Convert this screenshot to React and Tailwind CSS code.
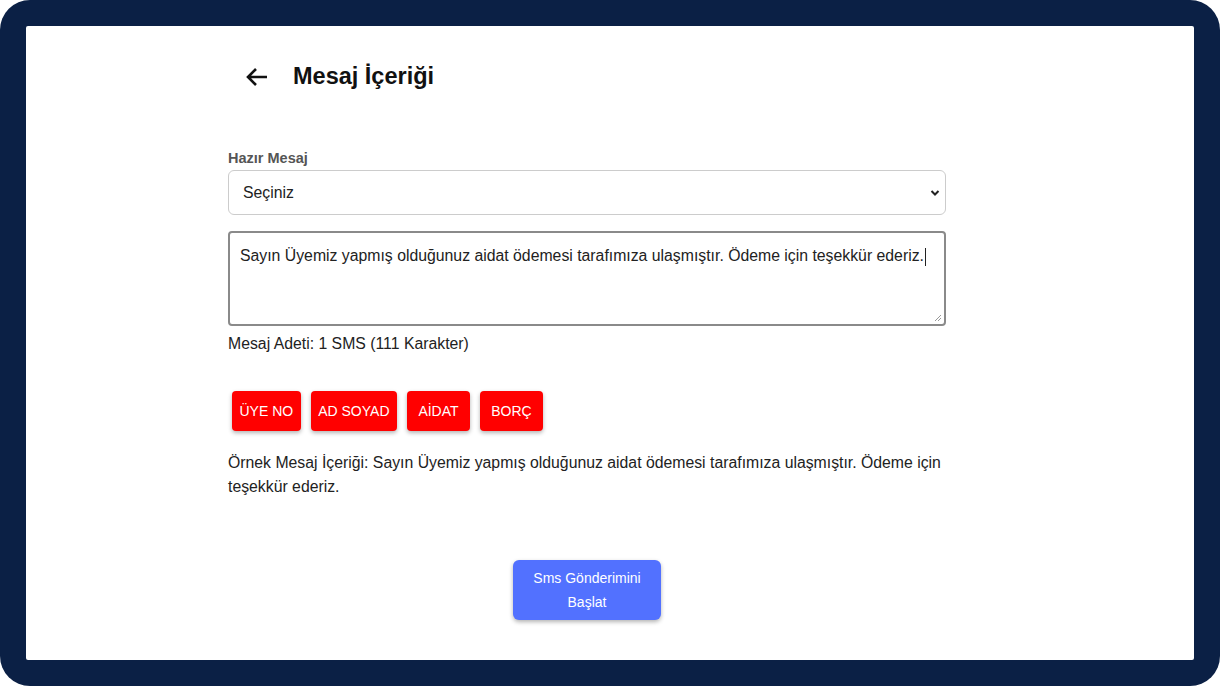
import React from "react";

export default function App() {
  const font = { fontFamily: '"Liberation Sans", Arial, sans-serif' };
  return (
    <div className="w-[1220px] h-[686px] bg-white" style={font}>
      <div className="w-full h-full rounded-[30px] bg-[#0b2045] p-[26px]">
        <div className="w-full h-full bg-white rounded-[2px] flex flex-col">
          <div className="w-[718px] ml-[202px] flex flex-col">
            <div className="flex items-center h-[50px] mt-[26px]">
              <svg width="24" height="20" viewBox="0 0 24 20" className="ml-[17px]">
                <path d="M22 10H3M11 2L3 10l8 8" stroke="#111" strokeWidth="2.6" fill="none" strokeLinecap="butt" />
              </svg>
              <h1 className="ml-[24px] text-[23.5px] font-bold text-[#111]">Mesaj İçeriği</h1>
            </div>
            <label className="mt-[48px] text-[14.5px] font-bold text-[#555] leading-[16px]">Hazır Mesaj</label>
            <div className="mt-[4px] relative h-[45px] border border-[#ccc] rounded-[6px] flex items-center px-[14px]">
              <span className="text-[15.8px] text-[#222]">Seçiniz</span>
              <svg width="10" height="8" viewBox="0 0 10 8" className="absolute right-[5px] top-[18px]">
                <path d="M1.5 2l3.5 3.5L8.5 2" stroke="#222" strokeWidth="2" fill="none" />
              </svg>
            </div>
            <div className="mt-[16px] relative h-[95px] border-2 border-[#8a8a8a] rounded-[4px] px-[10px] pt-[11px]">
              <span className="text-[15.8px] text-[#222] whitespace-nowrap">
                Sayın Üyemiz yapmış olduğunuz aidat ödemesi tarafımıza ulaşmıştır. Ödeme için teşekkür ederiz.
                <span className="inline-block w-[1px] h-[18px] bg-[#222] align-middle ml-[1px]" />
              </span>
              <svg width="8" height="8" viewBox="0 0 8 8" className="absolute right-[2px] bottom-[2px]">
                <path d="M7 1L1 7M7 4L4 7" stroke="#999" strokeWidth="1" />
              </svg>
            </div>
            <div className="mt-[8px] text-[15.8px] text-[#222] leading-[20px]">Mesaj Adeti: 1 SMS (111 Karakter)</div>
            <div className="mt-[37px] flex gap-[10px] ml-[4px]">
              {["ÜYE NO", "AD SOYAD", "AİDAT", "BORÇ"].map((t) => (
                <button key={t} className="h-[40px] min-w-[63px] px-[7.5px] bg-[#ff0000] text-white text-[14px] rounded-[4px] shadow-[0_2px_4px_rgba(0,0,0,0.3)]">
                  {t}
                </button>
              ))}
            </div>
            <p className="mt-[20px] text-[15.8px] leading-[24px] text-[#222] w-[718px]">
              Örnek Mesaj İçeriği: Sayın Üyemiz yapmış olduğunuz aidat ödemesi tarafımıza ulaşmıştır. Ödeme için teşekkür ederiz.
            </p>
            <div className="flex justify-center mt-[61px]">
              <button className="w-[148px] h-[60px] bg-[#5271ff] text-white text-[14px] leading-[24px] rounded-[6px] shadow-[0_2px_4px_rgba(0,0,0,0.3)]">
                Sms Gönderimini<br />Başlat
              </button>
            </div>
          </div>
        </div>
      </div>
    </div>
  );
}
